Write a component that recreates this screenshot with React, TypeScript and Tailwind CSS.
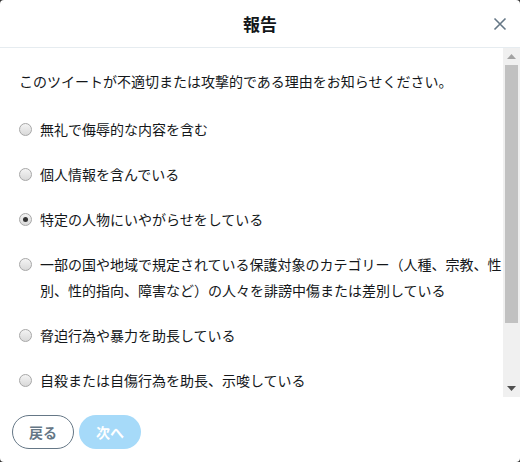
import React from "react";

const items = [
  "無礼で侮辱的な内容を含む",
  "個人情報を含んでいる",
  "特定の人物にいやがらせをしている",
  "一部の国や地域で規定されている保護対象のカテゴリー（人種、宗教、性別、性的指向、障害など）の人々を誹謗中傷または差別している",
  "脅迫行為や暴力を助長している",
  "自殺または自傷行為を助長、示唆している",
];

function Radio({ checked }: { checked: boolean }) {
  return (
    <div className="w-[13px] h-[13px] rounded-full border border-[#a7a7a7] bg-gradient-to-b from-[#f4f4f4] to-[#d9d9d9] flex items-center justify-center shrink-0">
      {checked && <div className="w-[5px] h-[5px] rounded-full bg-[#333]" />}
    </div>
  );
}

export default function App() {
  return (
    <div className="w-[520px] h-[462px] bg-[#333] overflow-hidden" style={{ fontFamily: '"Noto Sans CJK JP", sans-serif' }}>
      <div className="w-full h-full bg-white rounded-[4px] flex flex-col overflow-hidden">
        <div className="h-[48px] shrink-0 relative flex items-center justify-center border-b border-[#e6ecf0]">
          <span className="text-[17px] font-bold text-[#14171a]">報告</span>
          <svg className="absolute right-[13px] top-[17px]" width="14" height="14" viewBox="0 0 14 14">
            <path d="M1.5 1.5 L12.5 12.5 M12.5 1.5 L1.5 12.5" stroke="#657786" strokeWidth="1.6" fill="none" />
          </svg>
        </div>
        <div className="h-[349px] shrink-0 flex">
          <div className="flex-1 pl-[19px] pt-[20px] text-[14px] leading-[26px] text-[#14171a]">
            <p>このツイートが不適切または攻撃的である理由をお知らせください。</p>
            <div className="mt-[22px] flex flex-col gap-[19px]">
              {items.map((t, i) => (
                <div key={i} className="flex items-start">
                  <div className="h-[26px] flex items-center pt-[1px]">
                    <Radio checked={i === 2} />
                  </div>
                  <span className="ml-[8px]">{t}</span>
                </div>
              ))}
            </div>
          </div>
          <div className="w-[17px] shrink-0 bg-[#f0f0f0] flex flex-col">
            <div className="h-[17px] flex items-center justify-center">
              <svg width="9" height="5" viewBox="0 0 9 5"><path d="M0 5 L4.5 0 L9 5 Z" fill="#a3a3a3" /></svg>
            </div>
            <div className="flex-1 px-[2px]">
              <div className="h-[258px] bg-[#c1c1c1]" />
            </div>
            <div className="h-[17px] flex items-center justify-center">
              <svg width="9" height="5" viewBox="0 0 9 5"><path d="M0 0 L9 0 L4.5 5 Z" fill="#505050" /></svg>
            </div>
          </div>
        </div>
        <div className="flex-1 flex items-start pt-[18px] pl-[12px] gap-[5px]">
          <div className="w-[62px] h-[34px] rounded-full border border-[#657786] flex items-center justify-center text-[14px] font-bold text-[#657786]">戻る</div>
          <div className="w-[62px] h-[34px] rounded-full bg-[#a6daf9] flex items-center justify-center text-[14px] font-bold text-white">次へ</div>
        </div>
      </div>
    </div>
  );
}
